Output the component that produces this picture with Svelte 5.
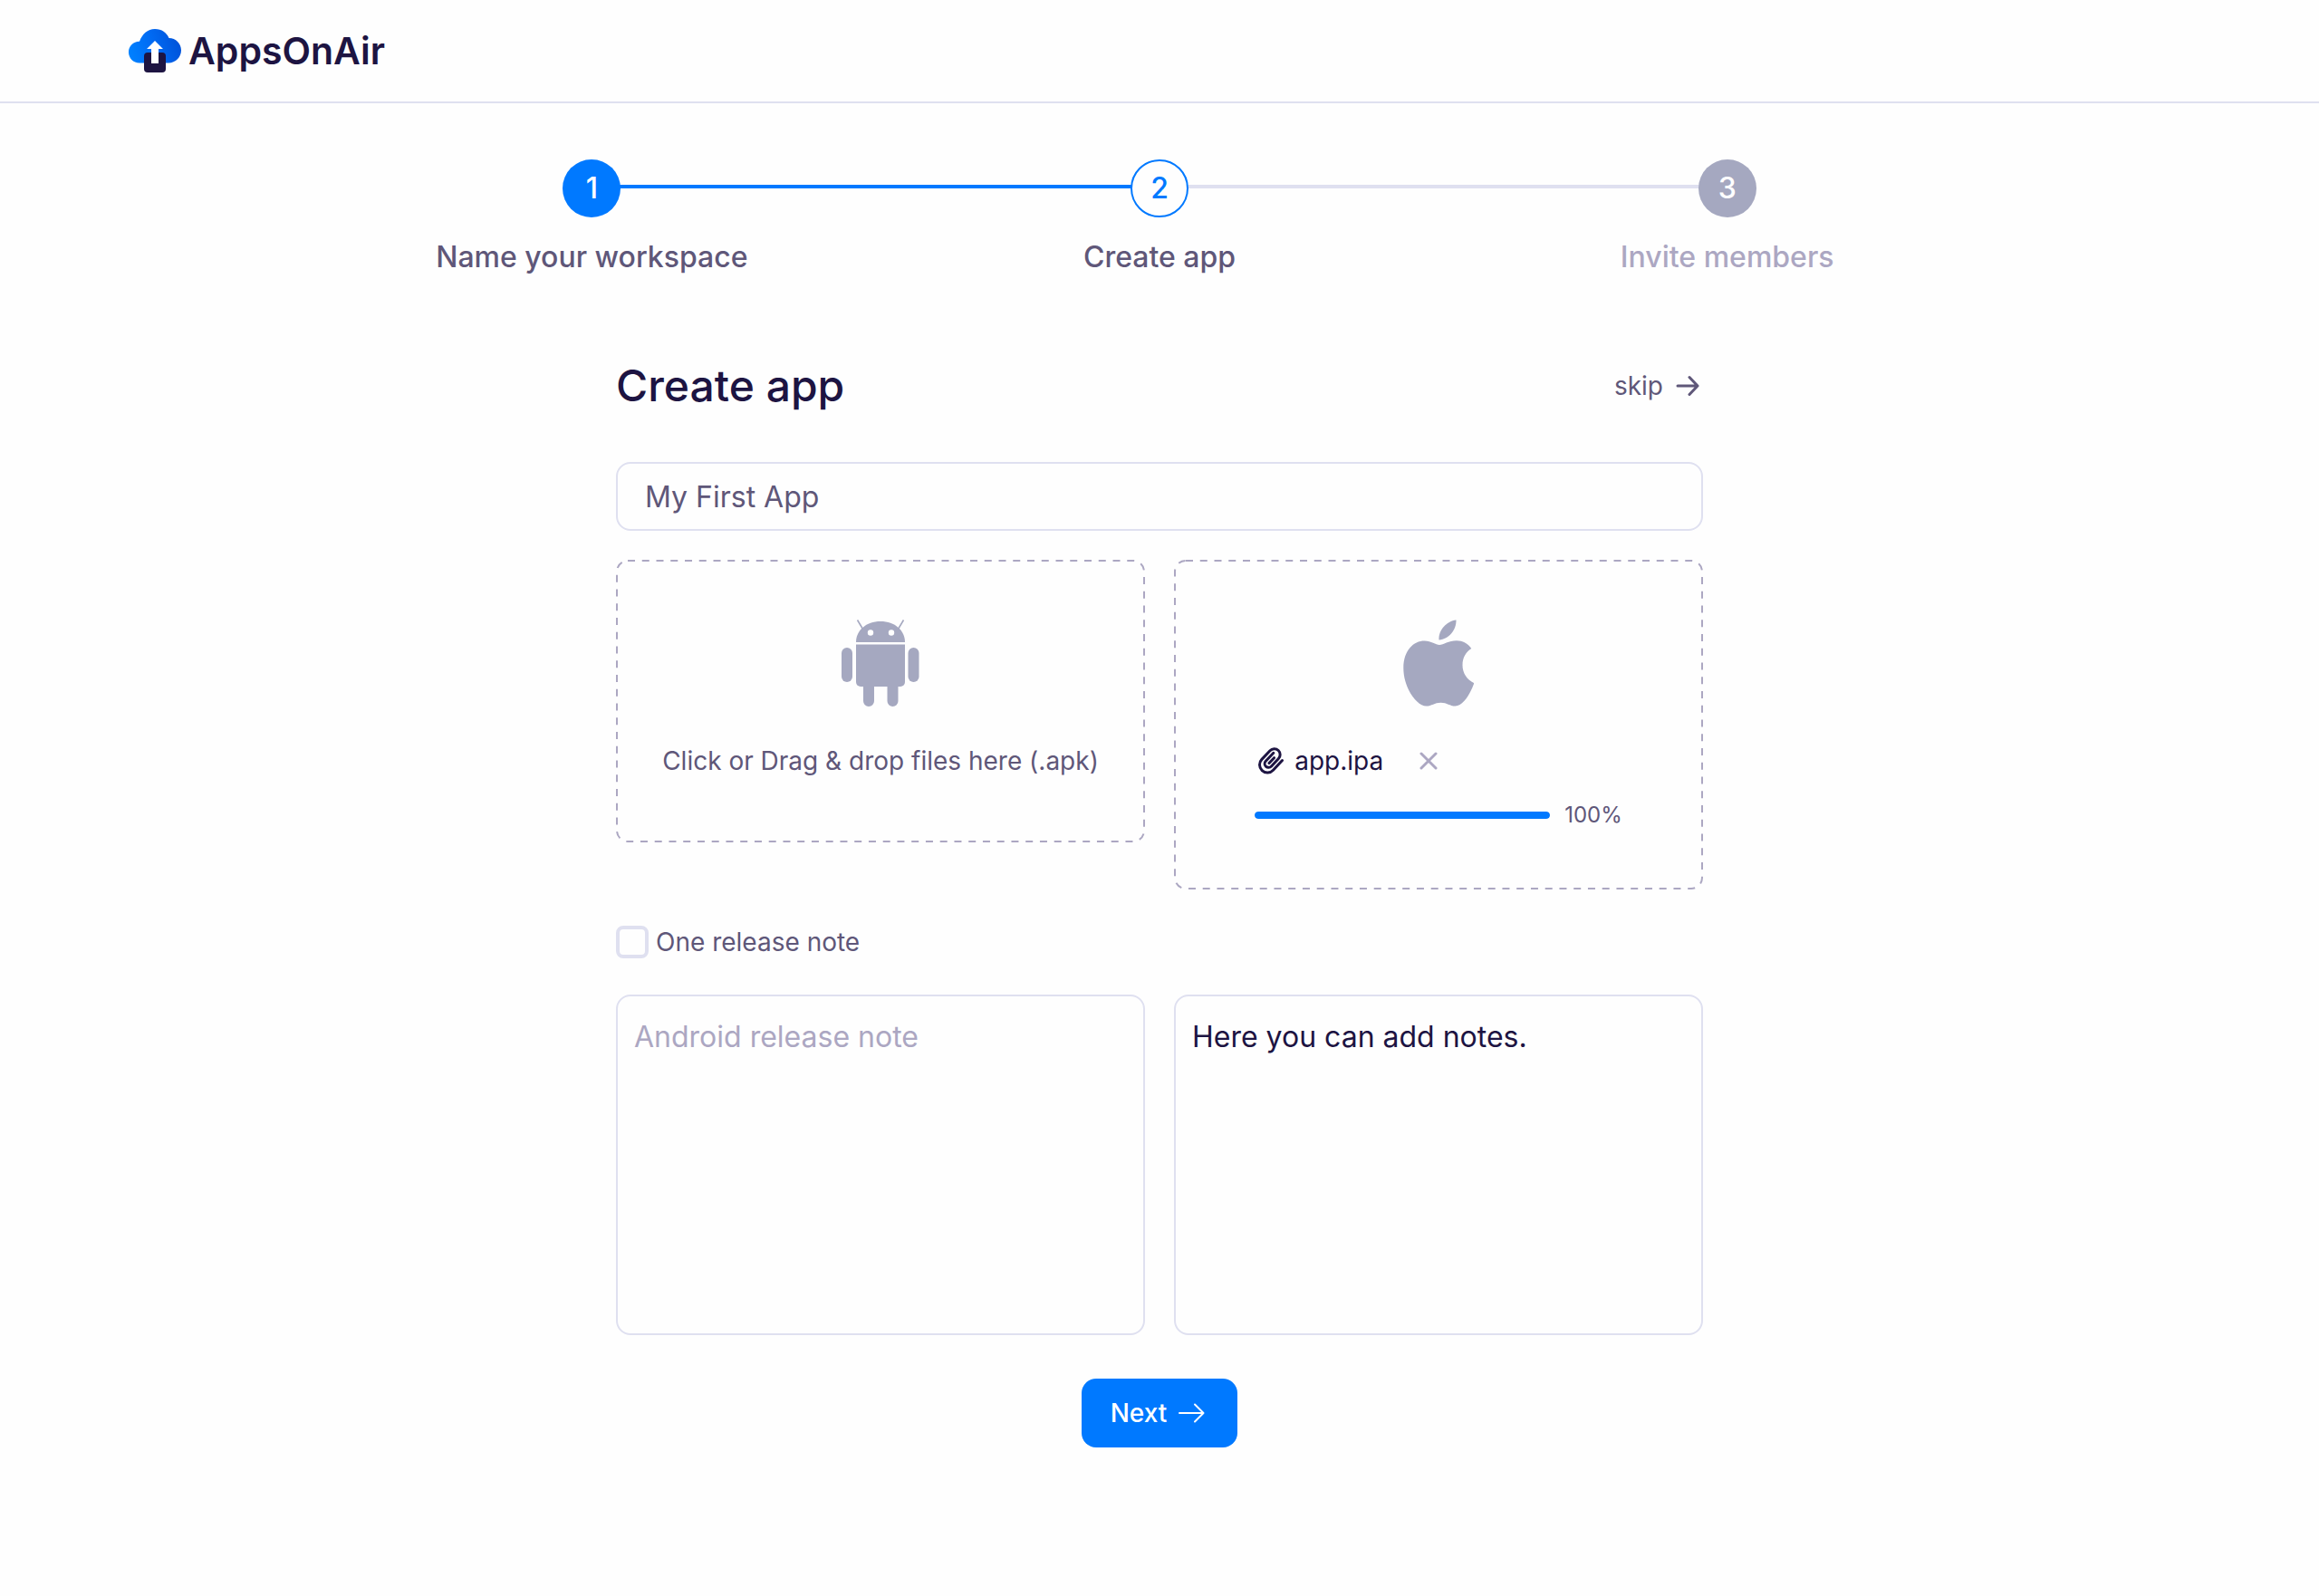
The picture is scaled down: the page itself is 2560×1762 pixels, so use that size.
<script>
  const steps = [
    { id: 1, label: 'Name your workspace', state: 'done' },
    { id: 2, label: 'Create app', state: 'current' },
    { id: 3, label: 'Invite members', state: 'todo' }
  ];

  let appName = 'My First App';
  let oneNote = false;
  let androidNote = '';
  let iosNote = 'Here you can add notes.';
  let iosFile = { name: 'app.ipa', progress: 100 };

  function removeFile() {
    iosFile = null;
  }
</script>

<div class="page">
  <header class="topbar">
    <a class="brand" href="#home">
      <svg width="58" height="48" viewBox="0 0 58 48" aria-hidden="true">
        <defs>
          <linearGradient id="cloud" x1="0" x2="1" y1="0.6" y2="0.4">
            <stop offset="0%" stop-color="#0080ff" />
            <stop offset="50%" stop-color="#0069f2" />
            <stop offset="100%" stop-color="#0052d8" />
          </linearGradient>
        </defs>
        <path d="M12 37.5C5 37.5 0 32 0 25.5 0 19 5 14 12 13.8 15 5.500 21 0 29 0c7.500 0 13 4 15.500 10C52 10 58 16 58 23.500S52 37.500 44 37.500z" fill="url(#cloud)" />
        <rect x="17" y="26" width="24" height="22" rx="4" fill="#1d1442" />
        <path d="M29 13l9 9h-5v16h-8V22h-5z" fill="#fff" />
      </svg>
      <span>AppsOnAir</span>
    </a>
  </header>

  <main>
    <ol class="steps">
      {#each steps as step}
        <li class="step {step.state}">
          <span class="bubble">{step.id}</span>
          <span class="step-label">{step.label}</span>
        </li>
      {/each}
    </ol>

    <form class="form" on:submit|preventDefault>
      <div class="form-head">
        <h1>Create app</h1>
        <a class="skip" href="#invite">
          skip
          <svg width="26" height="24" viewBox="0 0 26 24" aria-hidden="true">
            <path d="M2 12h22M15 2.500l9 9.500-9 9.500" fill="none" stroke="currentColor" stroke-width="3" stroke-linecap="round" stroke-linejoin="round" />
          </svg>
        </a>
      </div>

      <input class="field name" type="text" aria-label="App name" bind:value={appName} />

      <div class="pair drops">
        <button class="drop" type="button">
          <svg class="outline" aria-hidden="true"><rect x="1" y="1" rx="12" /></svg>
          <svg class="platform" width="86" height="96" viewBox="0 0 86 96" fill="currentColor" aria-hidden="true">
            <path d="M16 25C16 12 27 2 43 2s27 10 27 23z" />
            <path d="M17.500.5l6 10M68.500.5l-6 10" stroke="currentColor" stroke-width="1.600" />
            <circle cx="32" cy="14.500" r="3.200" fill="#fff" />
            <circle cx="55" cy="14.500" r="3.200" fill="#fff" />
            <path d="M16 27.500h54V69a5 5 0 0 1-5 5H21a5 5 0 0 1-5-5z" />
            <rect x="0" y="31" width="12" height="38" rx="6" />
            <rect x="73.500" y="31" width="12" height="38" rx="6" />
            <path d="M24 72h12v18a6 6 0 0 1-12 0zM50.500 72h12v18a6 6 0 0 1-12 0z" />
          </svg>
          <span>Click or Drag &amp; drop files here (.apk)</span>
        </button>

        <div class="drop">
          <svg class="outline" aria-hidden="true"><rect x="1" y="1" rx="12" /></svg>
          <svg class="platform" width="78" height="96" viewBox="0 0 78 96" fill="currentColor" aria-hidden="true">
            <path d="M58.500.5c.3 11-8 21-19 22C38.500 12 48 1.500 58.500.5z" />
            <path d="M40 28c4.500 0 10-4.700 19-4.700 6.500 0 12.500 3.400 16.300 8.700-6 4-9.800 9.500-9.800 18.500 0 9 5.500 16.500 12.800 19.600C74.500 81 66.500 95.500 57.500 95.500c-6 0-9-3.800-16-3.800s-10 3.800-16 3.800C14.500 95.500.3 75 .3 53.500.3 34 11.500 23.500 23.500 23.500c7.500 0 12.500 4.500 16.500 4.500z" />
          </svg>
          {#if iosFile}
            <div class="upload">
              <div class="file">
                <svg width="28" height="30" viewBox="0 0 28 30" aria-hidden="true">
                  <path d="M26.500 14.500L16.500 25.200a8.600 8.600 0 0 1-12.300.4 8.600 8.600 0 0 1-.3-12.200L13 3.700a6.400 6.400 0 0 1 9.200-.2 6.400 6.400 0 0 1 .2 9L14.500 21a4.300 4.300 0 0 1-6.100.2 4.300 4.300 0 0 1-.1-6l8.500-8.900M12 17.500l5.500-5.800" fill="none" stroke="currentColor" stroke-width="3" stroke-linecap="round" />
                </svg>
                <span>{iosFile.name}</span>
                <button class="remove" type="button" aria-label="Remove file" on:click={removeFile}>
                  <svg width="20" height="20" viewBox="0 0 20 20" aria-hidden="true">
                    <path d="M2 2l16 16M18 2L2 18" stroke="currentColor" stroke-width="3" stroke-linecap="round" />
                  </svg>
                </button>
              </div>
              <div class="progress">
                <div class="track"><div class="bar" style="width:{iosFile.progress}%"></div></div>
                <span>{iosFile.progress}%</span>
              </div>
            </div>
          {/if}
        </div>
      </div>

      <label class="check">
        <input type="checkbox" bind:checked={oneNote} />
        One release note
      </label>

      <div class="pair">
        <textarea class="field note" aria-label="Android release note" placeholder="Android release note" bind:value={androidNote}></textarea>
        <textarea class="field note" aria-label="iOS release note" placeholder="iOS release note" bind:value={iosNote}></textarea>
      </div>

      <button class="next" type="submit">
        Next
        <svg width="30" height="24" viewBox="0 0 30 24" aria-hidden="true">
          <path d="M2 12h26.500M19 2.500l9.500 9.500-9.500 9.500" fill="none" stroke="currentColor" stroke-width="2" stroke-linecap="round" stroke-linejoin="round" />
        </svg>
      </button>
    </form>
  </main>
</div>

<style>
  :global(body) { background: #fefefe; }

  .page {
    --blue: #0079ff;
    --navy: #1d1442;
    --text: #5f5779;
    --muted: #aca7c2;
    --icon: #a5a8c0;
    --line: #dfe0f0;
    font-family: Inter, 'Liberation Sans', sans-serif;
    font-size: 28px;
    line-height: 40px;
    color: var(--text);
  }

  .page * { box-sizing: border-box; }

  input, textarea, button { font: inherit; color: inherit; }
  svg { display: block; flex: none; }

  .topbar {
    display: flex;
    align-items: center;
    height: 114px;
    padding: 0 142px;
    border-bottom: 2px solid var(--line);
  }
  .brand {
    display: flex;
    align-items: center;
    gap: 8px;
    color: var(--navy);
    font-size: 41px;
    font-weight: 600;
    text-decoration: none;
  }

  main { padding: 62px 32px; }

  /* stepper */
  .steps {
    display: grid;
    grid-template-columns: repeat(3, 1fr);
    max-width: 1880px;
    margin: 0 auto;
    padding: 0;
    list-style: none;
  }
  .step {
    position: relative;
    display: flex;
    flex-direction: column;
    align-items: center;
    gap: 24px;
    font-size: 32px;
    font-weight: 500;
  }
  /* connector between two bubbles */
  .step + .step::before {
    content: '';
    position: absolute;
    top: 28px;
    right: 50%;
    width: 100%;
    height: 4px;
    background: var(--line);
  }
  .step.current::before { background: var(--blue) !important; }
  .bubble {
    position: relative;
    z-index: 1;
    display: flex;
    align-items: center;
    justify-content: center;
    width: 64px;
    height: 64px;
    border-radius: 50%;
    background: var(--blue);
    color: #fff;
  }
  .current .bubble { background: #fefefe; border: 2px solid var(--blue); color: var(--blue); }
  .todo .bubble { background: var(--icon); }
  .todo .step-label { color: var(--muted); }

  /* form */
  .form {
    display: flex;
    flex-direction: column;
    max-width: 1200px;
    margin: 92px auto 0;
  }
  .form-head {
    display: flex;
    align-items: center;
    justify-content: space-between;
    margin-bottom: 54px;
  }
  h1 {
    margin: 0;
    color: var(--navy);
    font-size: 48px;
    font-weight: 500;
    line-height: 60px;
  }
  .skip {
    display: flex;
    align-items: center;
    gap: 14px;
    padding-right: 4px;
    color: var(--text);
    text-decoration: none;
  }

  .field {
    display: block;
    width: 100%;
    border: 2px solid var(--line);
    border-radius: 16px;
    background: transparent;
    font-size: 32px;
    outline: none;
  }
  .name { height: 76px; padding: 0 30px; }

  .pair {
    display: grid;
    grid-template-columns: 1fr 1fr;
    gap: 32px;
    align-items: start;
  }
  .drops { margin-top: 32px; }
  .drop {
    position: relative;
    display: flex;
    flex-direction: column;
    align-items: center;
    gap: 40px;
    padding: 66px 24px 70px;
    border: none;
    background: transparent;
  }
  .outline {
    position: absolute;
    inset: 0;
    width: 100%;
    height: 100%;
    pointer-events: none;
  }
  .outline rect {
    width: calc(100% - 2px);
    height: calc(100% - 2px);
    fill: none;
    stroke: var(--muted);
    stroke-width: 2;
    stroke-dasharray: 8 7.75;
  }
  .platform { color: var(--icon); }

  .upload { display: flex; flex-direction: column; gap: 28px; }
  .file {
    display: flex;
    align-items: center;
    gap: 12px;
    padding-left: 4px;
    color: var(--navy);
  }
  .remove {
    margin-left: 28px;
    padding: 0;
    border: none;
    background: none;
    color: var(--muted);
    cursor: pointer;
  }
  .progress {
    display: flex;
    align-items: center;
    gap: 16px;
    font-size: 24px;
    line-height: 24px;
  }
  .track {
    width: 326px;
    height: 8px;
    border-radius: 4px;
    background: var(--line);
    overflow: hidden;
  }
  .bar { height: 100%; background: var(--blue); border-radius: 4px; }

  .check {
    display: flex;
    align-items: center;
    gap: 8px;
    align-self: flex-start;
    margin: 38px 0;
  }
  .check input {
    appearance: none;
    width: 36px;
    height: 36px;
    margin: 0;
    border: 4px solid var(--line);
    border-radius: 8px;
  }
  .check input:checked { background: var(--blue); border-color: var(--blue); }

  .note {
    height: 376px;
    padding: 25px 18px;
    color: var(--navy);
    resize: none;
  }
  .note::placeholder { color: var(--muted); }

  .next {
    display: flex;
    align-items: center;
    align-self: center;
    gap: 12px;
    height: 76px;
    margin-top: 48px;
    padding: 0 36px 0 32px;
    border: none;
    border-radius: 16px;
    background: var(--blue);
    color: #fff;
    font-weight: 500;
    cursor: pointer;
  }
</style>
